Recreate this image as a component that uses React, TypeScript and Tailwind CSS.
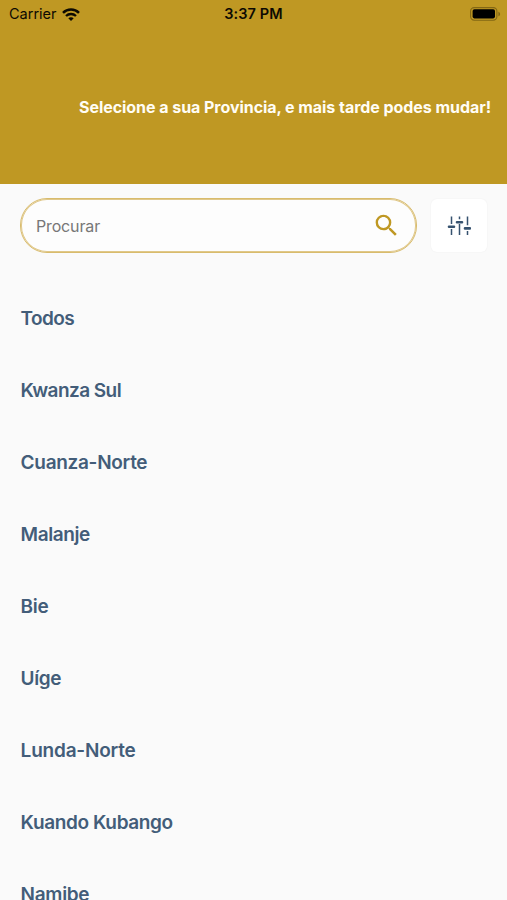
import { useState } from "react";
import { MdSearch } from "react-icons/md";

const PROVINCES = [
  { name: "Todos", className: "tracking-[-0.6px]" },
  { name: "Kwanza Sul", className: "tracking-[-0.55px]" },
  { name: "Cuanza-Norte", className: "tracking-[-0.3px]" },
  { name: "Malanje", className: "tracking-[-0.4px]" },
  { name: "Bie", className: "tracking-[-0.3px]" },
  { name: "Uíge", className: "tracking-[-0.4px]" },
  { name: "Lunda-Norte", className: "tracking-[-0.2px]" },
  { name: "Kuando Kubango", className: "tracking-[-0.38px]" },
  { name: "Namibe", className: "tracking-[-0.3px]" },
];

function WifiIcon() {
  return (
    <svg width="18" height="13" viewBox="0 0 18 13" fill="none" stroke="#0d0a02">
      <path d="M1 4.9C5.4.5 12.6.5 17 4.9" strokeWidth="2.5" />
      <path d="M4 8c2.8-2.7 7.2-2.7 10 0" strokeWidth="2.3" />
      <path d="M9 13 6.3 10.2c1.5-1.4 3.9-1.4 5.4 0Z" fill="#0d0a02" stroke="none" />
    </svg>
  );
}

function BatteryIcon() {
  return (
    <svg width="31" height="14" viewBox="0 0 31 14" fill="none">
      <rect x="0.6" y="0.6" width="26.3" height="12.6" rx="3.6" stroke="#836715" strokeWidth="1.1" />
      <rect x="2.6" y="2.2" width="22.4" height="9.2" rx="1.8" fill="#000" />
      <path d="M28.4 4.7c1 .4 1.7 1.2 1.7 2.3s-.7 1.9-1.7 2.3Z" fill="#836715" />
    </svg>
  );
}

function SlidersIcon() {
  return (
    <svg width="24" height="20" viewBox="0 0 24 20" stroke="#36526f" fill="none">
      <path d="M4.5 .5v7.5M4.5 13v6M12.5 .5v2.8M12.5 8v11M20.5 .5v8.7M20.5 15v4" strokeWidth="1.5" />
      <path d="M2 10.7h5M10 6.2h5M18 12.4h5" strokeWidth="2.6" strokeLinecap="round" />
    </svg>
  );
}

export default function App() {
  const [search, setSearch] = useState("");

  return (
    <main className="h-[900px] overflow-hidden bg-[#fafafa] font-['Inter',sans-serif]">
      <header className="h-[184px] bg-[#bf9823]">
        <div className="grid h-7 grid-cols-3 items-center pr-[6px] pl-[9px] text-[#0d0a02]">
          <div className="flex items-center gap-[5px]">
            <span className="text-[14.5px] leading-7">Carrier</span>
            <WifiIcon />
          </div>
          <span className="pr-[3px] text-center text-[14.5px] leading-7 font-semibold tracking-[0.1px]">
            3:37 PM
          </span>
          <div className="flex justify-end">
            <BatteryIcon />
          </div>
        </div>
        <h1 className="pt-[67px] pr-4 text-right text-[16px] leading-6 font-bold tracking-[-0.05px] whitespace-nowrap text-[#fffdf5]">
          Selecione a sua Provincia, e mais tarde podes mudar!
        </h1>
      </header>

      <div className="flex items-center gap-[14px] pt-[14px] pr-5 pl-5">
        <label className="flex h-[55px] w-[397px] items-center rounded-[27px] border border-[#d8bb6c] bg-[#fdfdfd] pr-[15px] pl-[15px] shadow-[inset_0_0_0_1px_#e0c88a]">
          <input
            value={search}
            onChange={(e) => setSearch(e.target.value)}
            placeholder="Procurar"
            className="min-w-0 flex-1 text-[16px] tracking-[-0.15px] text-[#36526f] outline-none placeholder:text-[#777777]"
          />
          <MdSearch className="size-[29px] text-[#bf9823]" />
        </label>
        <button className="flex h-[53px] w-[56px] items-center justify-center rounded-[6px] bg-white shadow-[0_0_2px_rgba(0,0,0,0.06)]">
          <SlidersIcon />
        </button>
      </div>

      <ul className="mt-[30px] pr-5 pl-[20.6px]">
        {PROVINCES.map((province) => (
          <li
            key={province.name}
            className="flex h-[72px] items-center text-[19px] font-semibold text-[#435d79]"
          >
            <span className={province.className}>{province.name}</span>
          </li>
        ))}
      </ul>
    </main>
  );
}
